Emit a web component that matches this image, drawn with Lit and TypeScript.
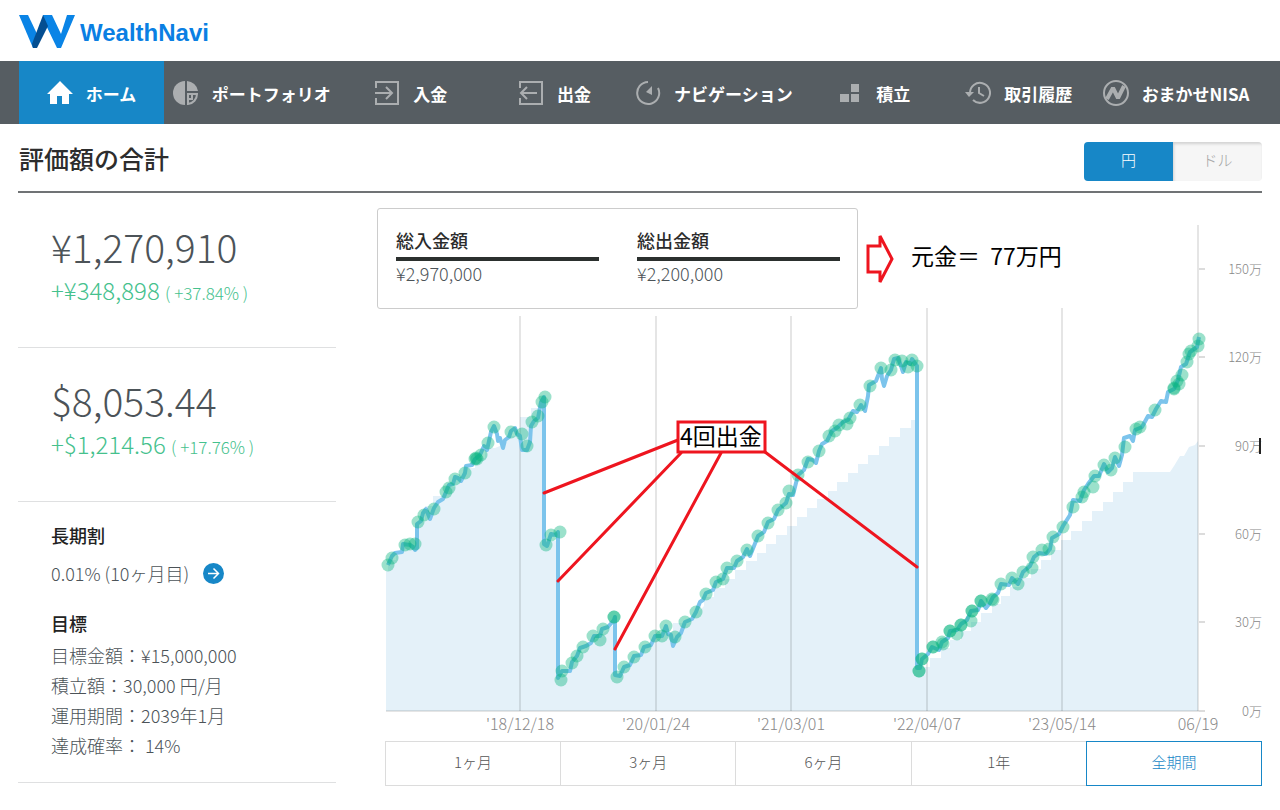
import { LitElement, html, css, svg } from "lit";
import { customElement, state } from "lit/decorators.js";
import { classMap } from "lit/directives/class-map.js";

type Point = [number, number];

const BASELINE = 711;

/* Valuation line */
const LINE: Point[] = [
  [388, 565], [392, 556], [395, 553], [402, 552], [403, 544], [410, 545], [413, 547], [415, 550], [417, 548],
  [417, 524], [421, 521], [423, 513], [426, 509], [430, 519], [434, 508], [438, 502], [443, 499], [446, 492],
  [449, 485], [453, 484], [455, 477], [458, 478], [461, 481], [465, 473], [466, 466], [472, 465], [475, 459],
  [480, 455], [484, 446], [487, 450], [489, 441], [491, 432], [494, 426], [497, 434], [498, 441], [500, 438],
  [503, 448], [505, 440], [509, 437], [511, 431], [515, 428], [517, 434], [520, 436], [522, 450], [527, 450],
  [530, 442], [531, 426], [534, 421], [538, 418], [541, 402], [544, 397], [544, 544], [547, 546], [551, 534],
  [556, 535], [558, 532], [558, 678], [562, 671], [570, 671], [572, 662], [577, 656], [580, 648], [586, 646],
  [591, 643], [594, 636], [600, 636], [602, 629], [608, 627], [614, 620], [615, 617], [615, 675], [620, 676],
  [624, 667], [630, 665], [634, 656], [641, 655], [644, 647], [651, 645], [655, 636], [662, 636], [666, 626],
  [668, 634], [671, 635], [673, 646], [677, 637], [681, 633], [685, 622], [692, 619], [696, 612], [700, 602],
  [703, 600], [706, 593], [713, 590], [716, 582], [723, 579], [727, 568], [734, 568], [737, 561], [743, 557],
  [747, 549], [750, 556], [754, 546], [758, 536], [764, 532], [768, 522], [774, 519], [778, 510], [786, 503],
  [789, 494], [793, 495], [798, 475], [804, 470], [808, 459], [813, 460], [816, 463], [819, 451], [822, 444],
  [827, 441], [832, 431], [838, 427], [843, 422], [848, 420], [853, 411], [857, 412], [861, 405], [865, 411],
  [868, 396], [869, 385], [876, 381], [881, 368], [882, 379], [884, 386], [887, 376], [891, 370], [894, 359],
  [898, 358], [901, 366], [903, 372], [906, 362], [910, 364], [912, 359], [917, 366], [917, 668], [920, 668],
  [922, 659], [928, 654], [932, 647], [939, 650], [942, 642], [948, 638], [950, 631], [957, 630], [961, 624],
  [967, 620], [971, 611], [978, 610], [981, 601], [986, 608], [990, 603], [993, 597], [998, 593], [1001, 584],
  [1009, 585], [1012, 578], [1018, 584], [1023, 572], [1030, 566], [1034, 557], [1039, 553], [1046, 554],
  [1050, 549], [1052, 538], [1059, 534], [1063, 526], [1070, 515], [1073, 500], [1080, 501], [1084, 490],
  [1088, 484], [1094, 476], [1099, 476], [1104, 464], [1108, 472], [1112, 468], [1115, 457], [1119, 466],
  [1122, 455], [1124, 438], [1130, 436], [1133, 441], [1135, 430], [1142, 427], [1148, 416], [1152, 417],
  [1156, 409], [1161, 401], [1166, 402], [1168, 392], [1174, 389], [1178, 380], [1181, 367], [1186, 364],
  [1190, 352], [1197, 347], [1199, 337],
];

/* Invested principal, drawn as a stepped area */
const PRINCIPAL: Point[] = [
  [386, 571], [388, 571], [388, 560], [396, 560], [396, 552], [404, 552], [404, 545], [417, 545], [417, 522],
  [425, 522], [425, 506], [433, 506], [433, 496], [445, 496], [445, 487], [455, 487], [455, 478], [465, 478],
  [465, 468], [475, 468], [475, 458], [485, 458], [485, 448], [495, 448], [505, 444], [511, 436], [520, 436],
  [520, 417], [531, 417], [531, 408], [544, 408], [544, 543], [558, 540], [558, 680], [572, 666], [583, 652],
  [593, 641], [605, 632], [615, 624], [615, 677], [634, 660], [645, 650], [656, 640], [664, 632], [673, 632],
  [673, 623], [684, 623], [694, 616], [704, 606], [704, 597], [714, 597], [714, 588], [725, 588], [725, 579],
  [735, 579], [735, 570], [746, 570], [746, 561], [757, 561], [757, 553], [766, 553], [766, 544], [776, 544],
  [776, 535], [787, 535], [787, 526], [797, 526], [797, 517], [807, 517], [807, 508], [817, 508], [817, 499],
  [828, 499], [828, 491], [837, 491], [837, 482], [848, 482], [848, 473], [858, 473], [858, 464], [868, 464],
  [868, 455], [879, 455], [879, 446], [889, 446], [889, 437], [900, 437], [900, 428], [911, 428], [911, 420],
  [917, 420], [917, 667], [930, 667], [930, 658], [941, 658], [941, 648], [950, 648], [950, 640], [961, 640],
  [961, 631], [971, 631], [971, 622], [981, 622], [981, 613], [992, 613], [992, 604], [1001, 604], [1001, 596],
  [1010, 596], [1010, 587], [1020, 587], [1020, 578], [1031, 578], [1031, 569], [1041, 569], [1041, 560],
  [1051, 560], [1051, 550], [1061, 550], [1061, 540], [1071, 540], [1071, 531], [1082, 531], [1082, 521],
  [1092, 521], [1092, 511], [1103, 511], [1103, 502], [1113, 502], [1113, 492], [1123, 492], [1123, 482],
  [1133, 482], [1133, 472], [1170, 472], [1174, 466], [1180, 456], [1184, 456], [1189, 447], [1195, 445],
  [1198, 441],
];

/* Deposits and withdrawals */
const EVENTS: Point[] = [
  [388, 565], [392, 558], [405, 545], [410, 544], [415, 544], [418, 522], [424, 515], [434, 509], [446, 492],
  [449, 488], [455, 479], [465, 473], [475, 459], [476, 458], [477, 459], [481, 455], [488, 443], [494, 427],
  [511, 432], [522, 434], [527, 446], [532, 422], [538, 416], [542, 402], [545, 397], [546, 545], [551, 535],
  [560, 532], [561, 680], [562, 671], [572, 663], [577, 656], [583, 647], [593, 636], [600, 640], [603, 629],
  [614, 617], [614, 617], [617, 677], [624, 667], [634, 657], [645, 647], [655, 636], [662, 636], [666, 626],
  [675, 637], [685, 622], [696, 612], [706, 594], [716, 582], [723, 579], [727, 568], [737, 561], [747, 550],
  [758, 536], [768, 523], [778, 510], [786, 503], [789, 491], [798, 475], [808, 462], [819, 451], [829, 436],
  [835, 431], [839, 425], [847, 424], [850, 418], [860, 405], [870, 386], [881, 368], [891, 370], [895, 360],
  [902, 361], [908, 367], [912, 360], [917, 366], [919, 671], [919, 671], [922, 659], [922, 659], [933, 647],
  [933, 647], [942, 642], [943, 644], [950, 631], [950, 631], [957, 634], [961, 625], [961, 625], [971, 621],
  [972, 611], [972, 611], [981, 601], [981, 601], [992, 599], [993, 600], [1001, 584], [1012, 578], [1018, 584],
  [1023, 572], [1032, 568], [1033, 557], [1042, 550], [1049, 549], [1053, 537], [1063, 527], [1073, 507],
  [1082, 497], [1084, 492], [1093, 487], [1095, 476], [1104, 465], [1111, 470], [1115, 458], [1125, 447],
  [1136, 429], [1140, 427], [1155, 410], [1174, 389], [1174, 388], [1177, 381], [1179, 384], [1182, 375],
  [1187, 362], [1189, 354], [1191, 351], [1198, 346], [1199, 339],
];

const DATES = [
  { x: 520, top: 316, text: "'18/12/18" },
  { x: 656, top: 316, text: "'20/01/24" },
  { x: 791, top: 316, text: "'21/03/01" },
  { x: 927, top: 308, text: "'22/04/07" },
  { x: 1062, top: 308, text: "'23/05/14" },
  { x: 1198, top: 225, text: "06/19" },
];

const AMOUNTS = [
  { y: 269, text: "150万" },
  { y: 357, text: "120万" },
  { y: 446, text: "90万" },
  { y: 534, text: "60万" },
  { y: 622, text: "30万" },
  { y: 711, text: "0万" },
];

const CALLOUT_LINES: [Point, Point][] = [
  [[678, 440], [544, 493]],
  [[681, 453], [558, 581]],
  [[721, 453], [615, 649]],
  [[765, 452], [917, 567]],
];

const join = (points: Point[]) => points.map((p) => p.join(",")).join(" ");

@customElement("asset-chart")
class AssetChart extends LitElement {
  static styles = css`
    :host { display: block; }
    .chart { display: block; width: 100%; height: auto; overflow: visible; }
    .area { fill: #e4f1f9; }
    .line { fill: none; stroke: #7cc4ec; stroke-width: 4; stroke-linejoin: round; }
    .event { fill: #05b47d; fill-opacity: 0.4; }
    .grid { stroke: #000; stroke-opacity: 0.1; stroke-width: 2; }
    .tick { stroke: #dcdcdc; stroke-width: 2; }
    .label { font-size: 16px; font-weight: 300; fill: #888; text-anchor: middle; }
    .amount { font-size: 13px; text-anchor: end; }
    .pointer { stroke: #ee151f; stroke-width: 3; stroke-linecap: round; }
    .box { fill: #fff; stroke: #ee151f; stroke-width: 3; }
    .note { font-size: 23px; font-weight: 400; fill: #000; text-anchor: middle; }
    .caret { fill: #222; }
  `;

  render() {
    return html`
      <svg class="chart" viewBox="377 208 885 528" role="img" aria-label="評価額の推移">
        <polygon class="area" points="386,${BASELINE} ${join(PRINCIPAL)} 1198,${BASELINE}"></polygon>
        ${DATES.map((d) => svg`<line class="grid" x1=${d.x} x2=${d.x} y1=${d.top} y2=${BASELINE}></line>`)}
        <line class="grid" x1="386" x2="1205" y1=${BASELINE} y2=${BASELINE}></line>
        ${AMOUNTS.map((a) => svg`
          <line class="tick" x1="1199" x2="1205" y1=${a.y} y2=${a.y}></line>
          <text class="label amount" x="1262" y=${a.y + 5}>${a.text}</text>`)}
        ${DATES.map((d) => svg`<text class="label" x=${d.x} y="730">${d.text}</text>`)}
        <polyline class="line" points=${join(LINE)}></polyline>
        ${EVENTS.map(([x, y]) => svg`<circle class="event" cx=${x} cy=${y} r="6.5"></circle>`)}
        <rect class="caret" x="1259" y="438" width="2" height="16"></rect>
        ${CALLOUT_LINES.map(([a, b]) => svg`<line class="pointer" x1=${a[0]} y1=${a[1]} x2=${b[0]} y2=${b[1]}></line>`)}
        <rect class="box" x="678" y="422" width="87" height="30"></rect>
        <text class="note" x="721" y="445">4回出金</text>
      </svg>
    `;
  }
}

const ICONS = {
  home: svg`<path fill="#fff" d="M13 1 0 14h3v10h7v-8h5v8h7V14h4z"></path>`,
  portfolio: svg`<g fill="#abaeb0"><path d="M12 1a12 12 0 0 0 0 24z"></path><path d="M14 1a12 12 0 0 1 11 10H14z"></path></g>
    <path fill="none" stroke="#abaeb0" stroke-width="2" d="M15 14h9a10 10 0 0 1-9 10zM19 14v5h-4"></path>`,
  deposit: svg`<path fill="none" stroke="#abaeb0" stroke-width="2" d="M2 8V2h22v22H2v-6M1 13h17M12 7l6 6-6 6"></path>`,
  withdraw: svg`<path fill="none" stroke="#abaeb0" stroke-width="2" d="M2 8V2h22v22H2v-6M19 13H3M9 7l-6 6 6 6"></path>`,
  navigation: svg`<path fill="none" stroke="#abaeb0" stroke-width="2" d="M13 2a11 11 0 1 0 10 6"></path>
    <path fill="#abaeb0" d="M17 6v9l-6-3z"></path>`,
  saving: svg`<path fill="#abaeb0" d="M3 14h9v8H3zM14 14h8v8h-8zM14 4h8v8h-8z"></path>`,
  history: svg`<path fill="none" stroke="#abaeb0" stroke-width="2" d="M5 13A10 10 0 1 1 8 20M14 7v6l5 3"></path>
    <path fill="#abaeb0" d="M0 12h9l-5 5z"></path>`,
  nisa: svg`<circle cx="13" cy="13" r="12" fill="none" stroke="#abaeb0" stroke-width="2"></circle>
    <path fill="none" stroke="#abaeb0" stroke-width="4" stroke-linejoin="bevel" d="M4 19 10 8l5 10 6-12"></path>`,
};

const NAV = [
  { icon: ICONS.home, label: "ホーム", current: true },
  { icon: ICONS.portfolio, label: "ポートフォリオ" },
  { icon: ICONS.deposit, label: "入金" },
  { icon: ICONS.withdraw, label: "出金" },
  { icon: ICONS.navigation, label: "ナビゲーション" },
  { icon: ICONS.saving, label: "積立" },
  { icon: ICONS.history, label: "取引履歴" },
  { icon: ICONS.nisa, label: "おまかせNISA" },
];

const RANGES = ["1ヶ月", "3ヶ月", "6ヶ月", "1年", "全期間"];

@customElement("app-root")
class AppRoot extends LitElement {
  @state() private currency = "円";
  @state() private range = "全期間";

  static styles = css`
    :host {
      display: block;
      min-height: 100vh;
      background: #fff;
      color: #4c5358;
      font-family: "Noto Sans CJK JP", "Noto Sans", sans-serif;
      font-size: 18px;
      font-weight: 300;
    }
    * { box-sizing: border-box; margin: 0; }
    button { font: inherit; cursor: pointer; padding: 0 0 4px; }

    .header { display: flex; align-items: center; height: 61px; padding: 2px 18px 0; }
    .brand { display: flex; align-items: center; gap: 4px; text-decoration: none; }
    .brand-name { font: 700 24px/32px "Liberation Sans", sans-serif; color: #0a7fe3; padding-top: 2px; }

    .nav {
      display: grid;
      grid-template-columns: 145fr 176fr 142fr 146fr 173fr 147fr 143fr 172fr;
      padding: 0 18px 0 19px;
      background: #565d62;
    }
    .nav-link {
      display: flex; align-items: center; justify-content: center; gap: 13px;
      height: 63px;
      color: #fff; text-decoration: none; white-space: nowrap;
      font-size: 17px; font-weight: 700;
    }
    .nav-link.current { background: #1787c7; }
    .nav-label { padding-top: 1px; }

    .title-bar {
      display: flex; align-items: flex-start; justify-content: space-between;
      height: 69px; margin: 0 18px; padding-top: 18px;
      border-bottom: 2px solid #707375;
    }
    .title { padding-left: 1px; font-size: 25px; line-height: 32px; font-weight: 500; color: #2d2d2d; }
    .toggle { display: flex; width: 178px; height: 39px; border-radius: 4px; overflow: hidden; }
    .toggle-button {
      flex: 1; border: 0; background: #f6f6f6; color: #a5a5a5; font-size: 15px;
      box-shadow: inset 1px 2px 3px rgba(0, 0, 0, 0.15);
    }
    .toggle-button.on { background: #1787c7; color: #fff; box-shadow: none; }

    .content {
      display: grid;
      grid-template-columns: minmax(0, 318fr) minmax(0, 885fr);
      column-gap: 41px;
      padding: 0 18px;
      align-items: start;
    }
    .summary { padding-top: 1px; }
    .block { padding: 29px 0 0 33px; height: 154px; border-bottom: 1px solid #dfe0e1; }
    .amount { font-size: 39px; line-height: 46px; }
    .gain { font-size: 24px; line-height: 42px; color: #45c18d; }
    .rate { font-size: 17px; }
    .details { padding: 18px 0 22px 33px; border-bottom: 1px solid #dfe0e1; }
    .heading { font-size: 18px; line-height: 30px; font-weight: 500; color: #222; }
    .discount { display: flex; align-items: center; gap: 14px; line-height: 30px; margin: 8px 0 20px; }
    .more { display: flex; }
    .goals { list-style: none; padding: 2px 0 0; line-height: 30px; }

    .chart-panel { position: relative; padding-top: 15px; }
    .overlay { position: absolute; top: 15px; left: 0; display: flex; align-items: center; }
    .totals {
      display: grid; grid-template-columns: 203px 203px; column-gap: 38px;
      width: 481px; height: 101px; padding: 18px;
      background: #fff; border: 1px solid #ccc; border-radius: 3px;
    }
    .total-label {
      padding-bottom: 4px;
      font-size: 18px; line-height: 26px; font-weight: 500; color: #2b2b2b;
      border-bottom: 4px solid #2b302e;
    }
    .total-value { line-height: 24px; }
    .arrow { margin-left: 8px; }
    .principal {
      margin-left: 17px; padding-bottom: 8px;
      font-size: 23px; line-height: 32px; font-weight: 400; color: #000; white-space: pre;
    }

    .ranges { display: flex; margin: 5px 0 0 8px; }
    .range {
      flex: 1; height: 45px;
      border: 1px solid #dcdcdc; border-right-width: 0; background: #fff; color: #555; font-size: 15px;
    }
    .range.on { border: 1px solid #1787c7; color: #1787c7; }
  `;

  render() {
    return html`
      <header class="header">
        <a class="brand" href="#">
          <svg width="58" height="34" viewBox="0 0 58 34" aria-hidden="true">
            <path fill="#0a84e6" d="M1 0h9l11 23-3 10h-3z"></path>
            <path fill="#0a84e6" d="M25 0h9l9 19 6-19h8L43 33h-4L25 4z"></path>
            <path fill="#044e91" d="M25 0l5 11-11 22h-4l-1-4z"></path>
          </svg>
          <span class="brand-name">WealthNavi</span>
        </a>
      </header>

      <nav class="nav">
        ${NAV.map((item) => html`
          <a class=${classMap({ "nav-link": true, current: !!item.current })} href="#">
            <svg width="26" height="26" viewBox="0 0 26 26" aria-hidden="true">${item.icon}</svg>
            <span class="nav-label">${item.label}</span>
          </a>`)}
      </nav>

      <div class="title-bar">
        <h1 class="title">評価額の合計</h1>
        <div class="toggle">
          ${["円", "ドル"].map((name) => html`
            <button
              class=${classMap({ "toggle-button": true, on: this.currency === name })}
              @click=${() => (this.currency = name)}
            >${name}</button>`)}
        </div>
      </div>

      <main class="content">
        <aside class="summary">
          <section class="block">
            <p class="amount">¥1,270,910</p>
            <p class="gain">+¥348,898 <span class="rate">( +37.84% )</span></p>
          </section>
          <section class="block">
            <p class="amount">$8,053.44</p>
            <p class="gain">+$1,214.56 <span class="rate">( +17.76% )</span></p>
          </section>
          <section class="details">
            <h2 class="heading">長期割</h2>
            <p class="discount">
              <span>0.01% (10ヶ月目)</span>
              <a class="more" href="#" aria-label="長期割の詳細">
                <svg width="21" height="21" viewBox="0 0 42 42" aria-hidden="true">
                  <circle cx="21" cy="21" r="21" fill="#1787c7"></circle>
                  <path fill="none" stroke="#fff" stroke-width="3" d="M10 21h20M21 11l10 10-10 10"></path>
                </svg>
              </a>
            </p>
            <h2 class="heading">目標</h2>
            <ul class="goals">
              <li>目標金額：¥15,000,000</li>
              <li>積立額：30,000 円/月</li>
              <li>運用期間：2039年1月</li>
              <li>達成確率： 14%</li>
            </ul>
          </section>
        </aside>

        <section class="chart-panel">
          <asset-chart></asset-chart>
          <div class="overlay">
            <div class="totals">
              <div>
                <h2 class="total-label">総入金額</h2>
                <p class="total-value">¥2,970,000</p>
              </div>
              <div>
                <h2 class="total-label">総出金額</h2>
                <p class="total-value">¥2,200,000</p>
              </div>
            </div>
            <svg class="arrow" width="28" height="56" viewBox="0 0 28 56" aria-hidden="true">
              <path fill="#fff" stroke="#ee151f" stroke-width="3" d="M2 15h12V5l12 23-12 23V41H2z"></path>
            </svg>
            <p class="principal">元金＝  77万円</p>
          </div>
          <div class="ranges">
            ${RANGES.map((name) => html`
              <button
                class=${classMap({ range: true, on: this.range === name })}
                @click=${() => (this.range = name)}
              >${name}</button>`)}
          </div>
        </section>
      </main>
    `;
  }
}
